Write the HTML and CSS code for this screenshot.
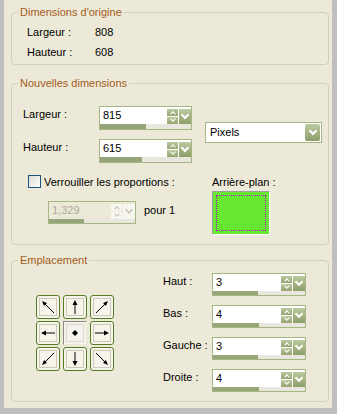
FILE: index.html
```html
<!DOCTYPE html>
<html lang="fr">
<head>
    <meta charset="UTF-8">
    <title>Taille de la zone de travail</title>
    <link rel="stylesheet" href="styles.css">
</head>
<body>
    <div class="dialog">
        <fieldset class="group g-orig">
            <legend>Dimensions d'origine</legend>
            <div class="orig">
                <span>Largeur :</span><span>808</span>
                <span>Hauteur :</span><span>608</span>
            </div>
        </fieldset>

        <fieldset class="group g-new">
            <legend>Nouvelles dimensions</legend>
            <div class="inner">
                <div class="size-row">
                    <div class="size-fields">
                        <div class="field">
                            <label>Largeur :</label>
                            <div class="spin w91 tall">
                                <div class="spin-top"><span class="spin-val">815</span><span class="updown"><i class="up"></i><i class="dn"></i></span><span class="drop-sm"></span></div>
                                <div class="spin-bar"><div class="fill" style="width:50%"></div></div>
                            </div>
                        </div>
                        <div class="field">
                            <label>Hauteur :</label>
                            <div class="spin w91 tall">
                                <div class="spin-top"><span class="spin-val">615</span><span class="updown"><i class="up"></i><i class="dn"></i></span><span class="drop-sm"></span></div>
                                <div class="spin-bar"><div class="fill" style="width:46%"></div></div>
                            </div>
                        </div>
                    </div>
                    <div class="select">
                        <span class="select-val">Pixels</span>
                        <span class="drop-lg"></span>
                    </div>
                </div>

                <div class="lock-row">
                    <div class="lock-left">
                        <label class="check"><span class="box"></span>Verrouiller les proportions :</label>
                        <div class="ratio">
                            <div class="spin w86 disabled">
                                <div class="spin-top"><span class="spin-val">1,329</span><span class="updown"><i class="up"></i><i class="dn"></i></span><span class="drop-sm"></span></div>
                                <div class="spin-bar"><div class="fill" style="width:41%"></div></div>
                            </div>
                            <span class="pour">pour 1</span>
                        </div>
                    </div>
                    <div class="bg-col">
                        <span>Arrière-plan :</span>
                        <div class="swatch"><div class="focus"></div></div>
                    </div>
                </div>
            </div>
        </fieldset>

        <fieldset class="group g-place">
            <legend>Emplacement</legend>
            <div class="inner">
                <div class="arrows">
                    <button class="ab"><span><svg class="r270" viewBox="0 0 16 16" width="16" height="16"><path d="M2 14 11 5" stroke="#000"/><path d="M14 2 11.9 6.9 9.1 4.1z"/></svg></span></button>
                    <button class="ab"><span><svg viewBox="0 0 16 16" width="16" height="16"><path d="M8 15V4" stroke="#000"/><path d="M8 1 5.5 6h5z"/></svg></span></button>
                    <button class="ab"><span><svg viewBox="0 0 16 16" width="16" height="16"><path d="M2 14 11 5" stroke="#000"/><path d="M14 2 11.9 6.9 9.1 4.1z"/></svg></span></button>
                    <button class="ab"><span><svg class="r270" viewBox="0 0 16 16" width="16" height="16"><path d="M8 15V4" stroke="#000"/><path d="M8 1 5.5 6h5z"/></svg></span></button>
                    <button class="ab center"><span><svg viewBox="0 0 16 16" width="16" height="16"><path d="M8 5 11 8 8 11 5 8z"/></svg></span></button>
                    <button class="ab"><span><svg class="r90" viewBox="0 0 16 16" width="16" height="16"><path d="M8 15V4" stroke="#000"/><path d="M8 1 5.5 6h5z"/></svg></span></button>
                    <button class="ab"><span><svg class="r180" viewBox="0 0 16 16" width="16" height="16"><path d="M2 14 11 5" stroke="#000"/><path d="M14 2 11.9 6.9 9.1 4.1z"/></svg></span></button>
                    <button class="ab"><span><svg class="r180" viewBox="0 0 16 16" width="16" height="16"><path d="M8 15V4" stroke="#000"/><path d="M8 1 5.5 6h5z"/></svg></span></button>
                    <button class="ab"><span><svg class="r90" viewBox="0 0 16 16" width="16" height="16"><path d="M2 14 11 5" stroke="#000"/><path d="M14 2 11.9 6.9 9.1 4.1z"/></svg></span></button>
                </div>

                <div class="place-fields">
                    <div class="pf">
                        <label>Haut :</label>
                        <div class="spin w92">
                            <div class="spin-top"><span class="spin-val">3</span><span class="updown"><i class="up"></i><i class="dn"></i></span><span class="drop-sm"></span></div>
                            <div class="spin-bar"><div class="fill" style="width:49%"></div></div>
                        </div>
                    </div>
                    <div class="pf">
                        <label>Bas :</label>
                        <div class="spin w92">
                            <div class="spin-top"><span class="spin-val">4</span><span class="updown"><i class="up"></i><i class="dn"></i></span><span class="drop-sm"></span></div>
                            <div class="spin-bar"><div class="fill" style="width:50%"></div></div>
                        </div>
                    </div>
                    <div class="pf">
                        <label>Gauche :</label>
                        <div class="spin w92">
                            <div class="spin-top"><span class="spin-val">3</span><span class="updown"><i class="up"></i><i class="dn"></i></span><span class="drop-sm"></span></div>
                            <div class="spin-bar"><div class="fill" style="width:49%"></div></div>
                        </div>
                    </div>
                    <div class="pf">
                        <label>Droite :</label>
                        <div class="spin w92">
                            <div class="spin-top"><span class="spin-val">4</span><span class="updown"><i class="up"></i><i class="dn"></i></span><span class="drop-sm"></span></div>
                            <div class="spin-bar"><div class="fill" style="width:50%"></div></div>
                        </div>
                    </div>
                </div>
            </div>
        </fieldset>
    </div>
</body>
</html>
```

FILE: styles.css
```css
body {
    margin: 0;
    background-color: #bfbfbf;
    font-family: "Liberation Sans", Arial, sans-serif;
    font-size: 11px;
    color: #000;
}

.dialog {
    width: 328px;
    height: 408px;
    margin-left: 4px;
    padding: 5px 3px 0 7px;
    box-sizing: border-box;
    background-color: #ece9d8;
}

/* cadres */
.group {
    width: 318px;
    margin: 0;
    padding: 0;
    border: 1px solid #d0d0bf;
    border-radius: 4px;
    box-sizing: border-box;
}

.group legend {
    margin-left: 6px;
    padding: 0 2px;
    line-height: 14px;
    color: #a35c1a;
}

.g-new {
    margin-top: 11px;
}

.g-place {
    margin-top: 8px;
}

/* dimensions d'origine */
.orig {
    display: grid;
    grid-template-columns: 68px auto;
    grid-auto-rows: 20px;
    line-height: 20px;
    padding: 3px 0 2px 15px;
}

/* nouvelles dimensions */
.g-new .inner {
    padding: 16px 0 9px 11px;
}

.size-row {
    display: flex;
}

.size-fields {
    display: flex;
    flex-direction: column;
    gap: 9px;
}

.field {
    display: flex;
    align-items: flex-start;
}

.field label {
    width: 76px;
    line-height: 17px;
}

.select {
    display: flex;
    width: 117px;
    height: 21px;
    margin: 16px 0 0 13px;
    padding: 1px;
    border: 1px solid #a4b681;
    background-color: #fff;
    box-sizing: border-box;
}

.select-val {
    flex: 1;
    padding-left: 3px;
    line-height: 17px;
}

.drop-lg {
    display: flex;
    align-items: center;
    justify-content: center;
    width: 15px;
    height: 17px;
    border-radius: 2px;
    background: linear-gradient(#bccaa0, #8d9e69);
}

.drop-lg::after {
    content: '';
    width: 4px;
    height: 4px;
    margin-top: -3px;
    border-right: 2px solid #fff;
    border-bottom: 2px solid #fff;
    transform: rotate(45deg);
}

/* champ numérique */
.spin {
    display: flex;
    flex-direction: column;
    border: 1px solid #a4b681;
    background-color: #fff;
}

.w91 { width: 91px; }
.w86 { width: 86px; }
.w92 { width: 92px; }

.spin-top {
    display: flex;
    height: 17px;
}

.spin-val {
    flex: 1;
    padding-left: 3px;
    line-height: 17px;
}

.updown {
    display: flex;
    flex-direction: column;
    gap: 1px;
    width: 11px;
    margin-top: 2px;
}

.updown i {
    display: flex;
    align-items: center;
    justify-content: center;
    height: 7px;
    background: linear-gradient(#bccaa0, #93a470);
}

.updown i::after {
    content: '';
    width: 3px;
    height: 3px;
    border-left: 1px solid #fff;
    border-top: 1px solid #fff;
    transform: rotate(45deg);
}

.updown .up::after {
    margin-top: 3px;
}

.updown .dn::after {
    margin-top: -3px;
    transform: rotate(225deg);
}

.drop-sm {
    display: flex;
    align-items: center;
    justify-content: center;
    width: 12px;
    height: 15px;
    margin: 2px 0 0 1px;
    background: linear-gradient(#bccaa0, #8d9e69);
}

.drop-sm::after {
    content: '';
    width: 4px;
    height: 4px;
    margin-top: -3px;
    border-right: 2px solid #fff;
    border-bottom: 2px solid #fff;
    transform: rotate(45deg);
}

.spin-bar {
    height: 4px;
    background-color: #e9e7dd;
}

.spin.tall .spin-bar {
    height: 5px;
}

.spin-bar .fill {
    height: 100%;
    background-color: #97a57a;
}

.spin.disabled {
    background-color: #ece9d8;
}

.spin.disabled .spin-val {
    color: #aca899;
}

.spin.disabled .updown i,
.spin.disabled .drop-sm {
    background: #f7f6f0;
}

.spin.disabled .updown i::after {
    border-color: #c4c2b6;
}

.spin.disabled .drop-sm::after {
    border-color: #d0cec4;
}

/* proportions */
.lock-row {
    display: flex;
    align-items: flex-start;
    margin-top: 12px;
}

.lock-left {
    width: 189px;
}

.check {
    display: flex;
    align-items: center;
    gap: 3px;
    height: 13px;
    margin-left: 5px;
}

.check .box {
    width: 11px;
    height: 11px;
    border: 1px solid #1c5180;
    background: linear-gradient(135deg, #dcdcd3, #fff);
}

.ratio {
    display: flex;
    align-items: flex-start;
    margin: 13px 0 0 25px;
}

.pour {
    margin-left: 8px;
    line-height: 18px;
}

.bg-col {
    display: flex;
    flex-direction: column;
    line-height: 14px;
}

.swatch {
    width: 58px;
    height: 44px;
    margin-top: 2px;
    padding: 3px;
    border: 1px solid #fff;
    border-top-color: #9d9d9d;
    border-left-color: #9d9d9d;
    background-color: #66e833;
    box-sizing: border-box;
}

.swatch .focus {
    height: 100%;
    border: 1px dotted #b000d0;
    box-sizing: border-box;
}

/* emplacement */
.g-place .inner {
    display: flex;
    align-items: center;
    padding: 6px 0 9px 24px;
}

.arrows {
    display: grid;
    grid-template-columns: repeat(3, 24px);
    grid-auto-rows: 24px;
    gap: 2px 3px;
    margin-right: 49px;
}

.ab {
    display: flex;
    width: 24px;
    height: 24px;
    margin: 0;
    padding: 2px;
    border: 1px solid #557c24;
    border-radius: 3px;
    background-color: #f6f4ea;
    box-sizing: border-box;
}

.ab span {
    display: flex;
    align-items: center;
    justify-content: center;
    flex: 1;
    border: 1px solid #cdc9b6;
}

.ab.center {
    border: 1px solid #ece9d8;
    border-top-color: #8e8c80;
    border-left-color: #8e8c80;
    border-radius: 0;
    background-color: #f3f2ec;
}

.ab.center span {
    border-color: #dcd9cc;
}

.r90 { transform: rotate(90deg); }
.r180 { transform: rotate(180deg); }
.r270 { transform: rotate(270deg); }

.place-fields {
    display: flex;
    flex-direction: column;
    gap: 9px;
}

.pf {
    display: flex;
    align-items: flex-start;
}

.pf label {
    width: 49px;
    line-height: 17px;
}
```
